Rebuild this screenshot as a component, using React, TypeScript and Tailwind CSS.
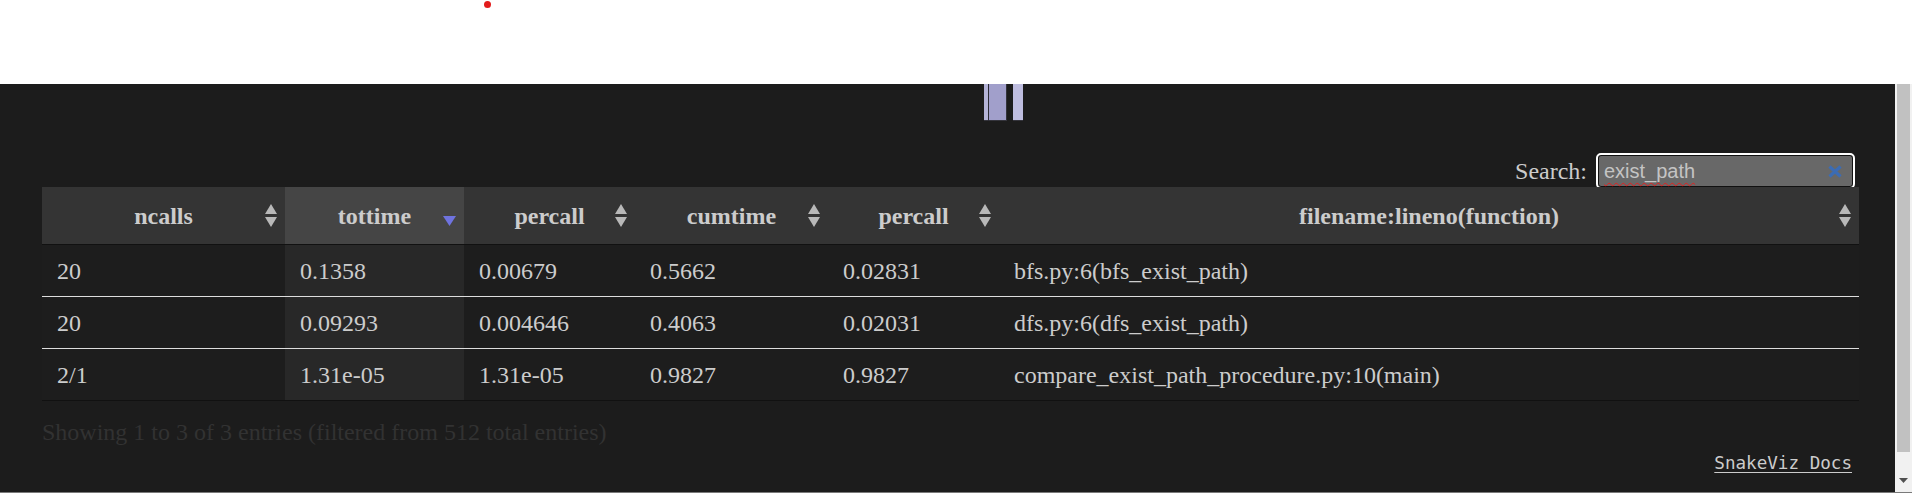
import React from "react";

type Row = {
  ncalls: string;
  tottime: string;
  percall: string;
  cumtime: string;
  percall2: string;
  fn: string;
};

const rows: Row[] = [
  { ncalls: "20", tottime: "0.1358", percall: "0.00679", cumtime: "0.5662", percall2: "0.02831", fn: "bfs.py:6(bfs_exist_path)" },
  { ncalls: "20", tottime: "0.09293", percall: "0.004646", cumtime: "0.4063", percall2: "0.02031", fn: "dfs.py:6(dfs_exist_path)" },
  { ncalls: "2/1", tottime: "1.31e-05", percall: "1.31e-05", cumtime: "0.9827", percall2: "0.9827", fn: "compare_exist_path_procedure.py:10(main)" },
];

const headers = ["ncalls", "tottime", "percall", "cumtime", "percall", "filename:lineno(function)"];

function SortBoth() {
  return (
    <svg width="12" height="23" viewBox="0 0 12 23" className="absolute right-[8px] top-[17px]">
      <polygon points="6,0 12,10 0,10" fill="#b8b8b8" />
      <polygon points="0,13 12,13 6,23" fill="#b8b8b8" />
    </svg>
  );
}

function SortDesc() {
  return (
    <svg width="13" height="10" viewBox="0 0 13 10" className="absolute right-[8px] top-[29px]">
      <polygon points="0,0 13,0 6.5,10" fill="#6f73df" />
    </svg>
  );
}

export default function App() {
  const grid = "grid grid-cols-[243px_179px_171px_193px_171px_860px] w-[1817px] ml-[42px]";

  return (
    <div className="w-[1912px] h-[493px] overflow-hidden bg-white font-['Liberation_Serif',serif]">
      {/* top white strip */}
      <div className="h-[84px] pt-[1px]">
        <div className="ml-[484px] w-[7px] h-[7px] rounded-full bg-[#e31c1c]" />
      </div>

      <div className="flex h-[408px]">
        <div className="flex-1 bg-[#1c1c1c] flex flex-col">
          {/* chart remnants */}
          <div className="flex h-[37px] pl-[984px]">
            <div className="w-[4px] bg-[#b4b3d7] border-b border-[#34343c]" />
            <div className="w-[1px] bg-[#2c2c36]" />
            <div className="w-[18px] bg-[#a19fcb] border-b border-r border-[#34343c]" />
            <div className="w-[6px]" />
            <div className="w-[10px] bg-[#bebddf] border-b border-[#34343c]" />
          </div>

          {/* search */}
          <div className="mt-[34px] h-[32px] flex justify-end items-center pr-[42px]">
            <span className="text-[24px] text-[#cccccc] mr-[11px] leading-none">Search:</span>
            <div className="w-[255px] h-[32px] rounded-[3px] border border-[#111111] bg-[#686868] outline-2 outline-white flex items-center justify-between pl-[5px] pr-[10px]">
              <span className="font-['Liberation_Sans',sans-serif] text-[20px] text-[#c4c4c4] underline decoration-wavy decoration-[#e02020] decoration-1 underline-offset-[4px]">
                exist_path
              </span>
              <svg width="14" height="13" viewBox="0 0 14 13">
                <path d="M1.5 1.5 L12.5 11.5 M12.5 1.5 L1.5 11.5" stroke="#3c6cb4" strokeWidth="3.2" />
              </svg>
            </div>
          </div>

          {/* table header */}
          <div className={`${grid} border-b border-[#111111]`}>
            {headers.map((h, i) => (
              <div
                key={i}
                className={`relative h-[57px] flex items-center justify-center text-[24px] font-bold text-[#cccccc] ${
                  i === 1 ? "bg-[#454545]" : "bg-[#343434]"
                }`}
              >
                {h}
                {i === 1 ? <SortDesc /> : <SortBoth />}
              </div>
            ))}
          </div>

          {/* table body */}
          {rows.map((r, ri) => (
            <div
              key={ri}
              className={`${grid} border-b ${ri === rows.length - 1 ? "border-[#111111]" : "border-[#dddddd]"}`}
            >
              {[r.ncalls, r.tottime, r.percall, r.cumtime, r.percall2, r.fn].map((v, ci) => (
                <div
                  key={ci}
                  className={`h-[51px] flex items-center pl-[15px] text-[24px] text-[#cccccc] ${
                    ci === 1 ? "bg-[#282828]" : "bg-[#1d1d1d]"
                  }`}
                >
                  {v}
                </div>
              ))}
            </div>
          ))}

          <div className="ml-[42px] mt-[17px] text-[24px] leading-[28px] text-[#323232]">
            Showing 1 to 3 of 3 entries (filtered from 512 total entries)
          </div>

          <div className="mt-[4px] flex justify-end pr-[43px]">
            <a className="font-['DejaVu_Sans_Mono',monospace] text-[17.6px] text-[#cccccc] underline underline-offset-[3px]">
              SnakeViz Docs
            </a>
          </div>
        </div>

        {/* scrollbar */}
        <div className="w-[17px] bg-[#f1f1f1] flex flex-col">
          <div className="mx-[2px] h-[368px] bg-[#c1c1c1]" />
          <div className="flex-1 flex items-end justify-center pb-[9px]">
            <svg width="9" height="5" viewBox="0 0 9 5">
              <polygon points="0,0 9,0 4.5,5" fill="#505050" />
            </svg>
          </div>
        </div>
      </div>
      <div className="h-[1px] bg-[#7a7a7a]" />
    </div>
  );
}
